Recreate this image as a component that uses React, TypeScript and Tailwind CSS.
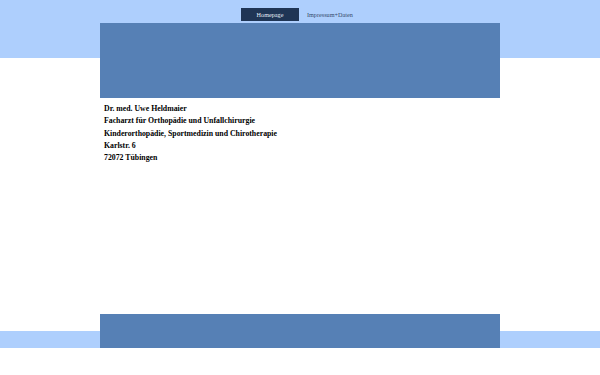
import React from 'react';

const lines = [
  'Dr. med. Uwe Heldmaier',
  'Facharzt für Orthopädie und Unfallchirurgie',
  'Kinderorthopädie, Sportmedizin und Chirotherapie',
  'Karlstr. 6',
  '72072 Tübingen',
];

export default function App() {
  return (
    <div className="min-h-[375px] w-full bg-white font-['Liberation_Serif',serif] flex flex-col">
      {/* header band */}
      <div className="bg-[linear-gradient(to_bottom,#aecffd_58px,#ffffff_58px)]">
        <div className="w-[400px] mx-auto">
          <nav className="flex items-center pt-[8px] h-[21px]">
            <a className="ml-[141px] w-[58px] h-[13px] bg-[#1f3555] text-[#e6eef8] text-[6.2px] flex items-center justify-center">
              Homepage
            </a>
            <a className="ml-[8px] text-[#34496a] text-[6.2px] leading-[13px]">Impressum+Daten</a>
          </nav>
          <div className="mt-[2px] h-[75px] bg-[#5680b5]" />
        </div>
      </div>

      {/* content */}
      <div className="w-[400px] mx-auto pt-[5px] px-[4px] flex-1 h-[216px]">
        {lines.map((l) => (
          <p key={l} className="text-[7.8px] font-bold leading-[12.3px] text-black">
            {l}
          </p>
        ))}
      </div>

      {/* footer band */}
      <div className="bg-[linear-gradient(to_bottom,transparent_17px,#aecffd_17px)]">
        <div className="w-[400px] mx-auto h-[34px] bg-[#5680b5]" />
      </div>
      <div className="h-[27px]" />
    </div>
  );
}
